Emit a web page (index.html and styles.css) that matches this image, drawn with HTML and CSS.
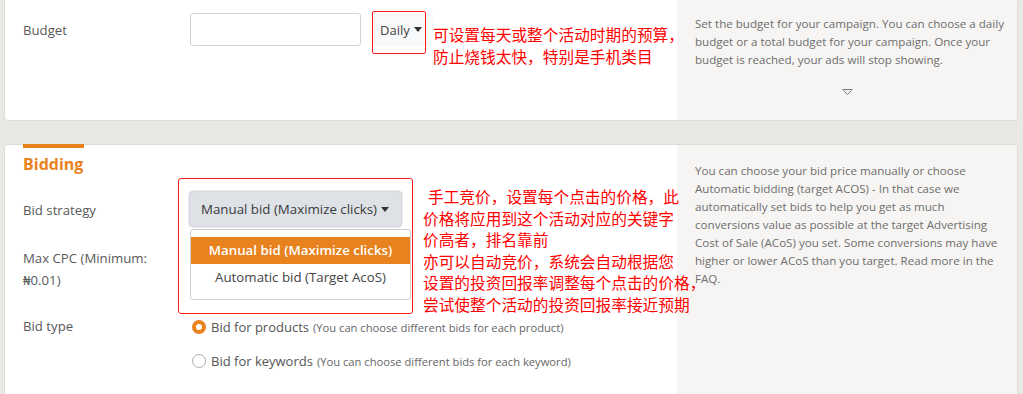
FILE: index.html
```html
<!DOCTYPE html>
<html lang="en">
<head>
<meta charset="utf-8">
<title>Campaign settings</title>
<link rel="stylesheet" href="styles.css">
</head>
<body>
<div class="page">
  <section class="card card-budget">
    <div class="main">
      <div class="budget-row">
        <div class="label label-budget">Budget</div>
        <input class="input" type="text">
        <div class="daily-wrap">
          <button class="daily" type="button">Daily<span class="caret"></span></button>
          <span class="annot-box"></span>
        </div>
        <p class="note note-budget">可设置每天或整个活动时期的预算，<br>防止烧钱太快，特别是手机类目</p>
      </div>
    </div>
    <aside class="side side-budget">
      <p class="help">Set the budget for your campaign. You can choose a daily budget or a total budget for your campaign. Once your budget is reached, your ads will stop showing.</p>
      <div class="toggle">
        <svg width="11" height="7" viewBox="0 0 11 7"><path d="M0.5 0.5H10.5M1.5 1.5L5.5 5.5L9.5 1.5" fill="none" stroke="#7a7a7a" stroke-width="1"/></svg>
      </div>
    </aside>
  </section>

  <section class="card card-bidding">
    <div class="main">
      <h2 class="title">Bidding</h2>
      <div class="bid-grid">
        <div class="label label-strategy">Bid strategy</div>
        <div class="annot-frame">
          <button class="select" type="button">Manual bid (Maximize clicks)<span class="caret"></span></button>
          <ul class="menu">
            <li class="menu-item is-active">Manual bid (Maximize clicks)</li>
            <li class="menu-item">Automatic bid (Target AcoS)</li>
          </ul>
        </div>
        <p class="note note-bid"><span class="lead-space"></span>手工竞价，设置每个点击的价格，此<br>价格将应用到这个活动对应的关键字<br>价高者，排名靠前<br>亦可以自动竞价，系统会自动根据您<br>设置的投资回报率调整每个点击的价格，<br>尝试使整个活动的投资回报率接近预期</p>
        <div class="label label-cpc">Max CPC (Minimum: ₦0.01)</div>
        <div class="label label-type">Bid type</div>
        <div class="radios">
          <label class="radio-row"><span class="radio is-checked"></span><span class="radio-text">Bid for products</span><span class="radio-hint">(You can choose different bids for each product)</span></label>
          <label class="radio-row"><span class="radio"></span><span class="radio-text">Bid for keywords</span><span class="radio-hint">(You can choose different bids for each keyword)</span></label>
        </div>
      </div>
    </div>
    <aside class="side side-bidding">
      <p class="help">You can choose your bid price manually or choose Automatic bidding (target ACOS) - In that case we automatically set bids to help you get as much conversions value as possible at the target Advertising Cost of Sale (ACoS) you set. Some conversions may have higher or lower ACoS than you target. Read more in the FAQ.</p>
    </aside>
  </section>
</div>
</body>
</html>
```

FILE: styles.css
```css
* { box-sizing: border-box; }

html, body {
  margin: 0;
  padding: 0;
}

body {
  background: #e8e8e5;
  font-family: "Open Sans", "Noto Sans", sans-serif;
  color: #555;
  width: 1023px;
  height: 394px;
  overflow: hidden;
}

.page {
  display: flex;
  flex-direction: column;
  gap: 23px;
}

.card {
  display: flex;
  margin: 0 5px 0 4px;
  background: #fff;
  border: 1px solid #dcdcd8;
  border-radius: 4px;
  overflow: visible;
}

.card-budget {
  height: 121px;
  border-top: none;
  border-radius: 0 0 4px 4px;
}

.main {
  width: 672px;
  flex: none;
  padding-left: 18px;
}

.side {
  flex: 1;
  background: #f6f5f3;
  padding: 15px 10px 0 18px;
  border-radius: 0 4px 4px 0;
}

.help {
  margin: 0;
  font-size: 11.6px;
  line-height: 18px;
  color: #6e6e6e;
}

.toggle {
  display: flex;
  justify-content: center;
  margin-top: 20px;
  padding-right: 8px;
}

.toggle svg { display: block; }

/* ---------- Budget row ---------- */
.budget-row {
  display: flex;
  align-items: flex-start;
  padding-top: 13px;
}

.budget-row > * { flex: none; }

.label {
  font-size: 13.2px;
  color: #595959;
}

.label-budget {
  width: 167px;
  line-height: 34px;
}

.input {
  width: 171px;
  height: 33px;
  border: 1px solid #cfd3d8;
  border-radius: 3px;
  background: #fff;
  margin: 0;
}

.daily-wrap {
  position: relative;
  margin-left: 11px;
}

.daily {
  display: flex;
  align-items: center;
  width: 61px;
  height: 33px;
  padding: 0 0 0 8px;
  margin: 0;
  border: none;
  border-radius: 3px;
  background: #f8f9fa;
  font-family: inherit;
  font-size: 13px;
  color: #444;
}

.caret {
  display: inline-block;
  width: 0;
  height: 0;
  margin-left: 4px;
  border-left: 4px solid transparent;
  border-right: 4px solid transparent;
  border-top: 5px solid #333;
}

.annot-box {
  position: absolute;
  left: 0;
  top: -2px;
  width: 54px;
  height: 43px;
  border: 1px solid #ff1a1a;
  border-radius: 2px;
}

.note {
  position: relative;
  z-index: 1;
  margin: 0;
  font-family: "Noto Sans CJK SC", "Noto Sans", sans-serif;
  font-size: 15.7px;
  color: #ff0000;
  white-space: nowrap;
}

.note-budget {
  margin-top: 11px;
  line-height: 22px;
}

.lead-space {
  display: inline-block;
  width: 5px;
}

/* ---------- Bidding ---------- */
.title {
  width: 61px;
  margin: -1px 0 3px;
  padding-top: 5px;
  border-top: 4px solid #e8821e;
  font-size: 16px;
  font-weight: 700;
  line-height: 22px;
  color: #e8821e;
}

.bid-grid {
  display: grid;
  grid-template-columns: 155px 235px 1fr;
  grid-template-rows: 48px 88px auto;
  padding-bottom: 40px;
}

.label-strategy {
  grid-column: 1;
  grid-row: 1;
  padding-top: 22px;
  line-height: 20px;
}

.label-cpc {
  grid-column: 1;
  grid-row: 2;
  padding: 21px 20px 0 0;
  line-height: 22px;
}

.annot-frame {
  grid-column: 2;
  grid-row: 1 / 3;
  border: 1px solid #ff1a1a;
  border-radius: 3px;
  padding: 12px 10px 13px 10px;
}

.select {
  display: flex;
  align-items: center;
  width: 213px;
  height: 36px;
  margin: 0;
  padding: 0 0 0 11px;
  border: 1px solid #d3d7dc;
  border-radius: 4px;
  background: #dee2e7;
  box-shadow: 0 0 0 1px #eceef1;
  font-family: inherit;
  font-size: 13.3px;
  color: #3a3a3a;
}

.menu {
  list-style: none;
  width: 221px;
  margin: 2px 0 0 1px;
  padding: 7px 0 8px;
  border: 1px solid #d0d0d0;
  border-radius: 3px;
  background: #fff;
}

.menu-item {
  height: 27px;
  line-height: 27px;
  text-align: center;
  font-size: 13.3px;
  color: #444;
}

.menu-item.is-active {
  background: #e8821e;
  color: #fff;
  font-weight: 600;
}

.note-bid {
  grid-column: 3;
  grid-row: 1 / 3;
  margin-left: 10px;
  padding-top: 8px;
  line-height: 21.5px;
}

.label-type {
  grid-column: 1;
  grid-row: 3;
  padding-top: 2px;
  line-height: 20px;
}

.radios {
  grid-column: 2 / 4;
  grid-row: 3;
  padding-left: 14px;
  display: flex;
  flex-direction: column;
  gap: 14px;
  padding-top: 3px;
}

.radio-row {
  display: flex;
  align-items: center;
  height: 20px;
  white-space: nowrap;
}

.radio {
  width: 14px;
  height: 14px;
  border: 1px solid #a9adb2;
  border-radius: 50%;
  background: #fff;
  margin-right: 5px;
  flex: none;
}

.radio.is-checked {
  border: 4px solid #e8821e;
}

.radio-text {
  font-size: 13px;
  color: #555;
}

.radio-hint {
  font-size: 11.2px;
  color: #666;
  margin-left: 4px;
}

.side-bidding {
  padding-top: 17px;
}
```
